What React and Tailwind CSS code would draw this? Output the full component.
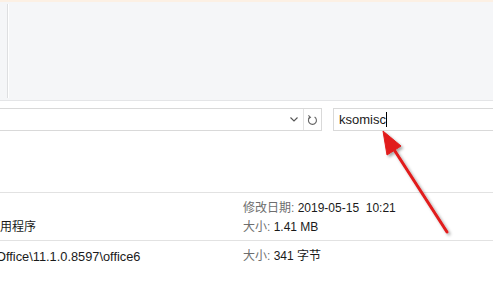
import React from 'react';

const labelCls = 'text-[#6e6e6e]';
const valueCls = 'text-[#1a1a1a]';

const App = () => {
  return (
    <div className="relative w-[493px] h-[299px] overflow-hidden bg-white text-[12px] leading-[19px] font-['Liberation_Sans','Noto_Sans_CJK_SC',sans-serif]">
      {/* ribbon */}
      <div className="h-[2px] bg-[#fcf0e4]" />
      <div className="h-[99px] bg-[#f5f6f8] border-b border-[#e4e5e7] flex pl-[7px] py-[2px]">
        <div className="w-[1px] bg-[#dedfe1]" />
        <div className="w-[1px] bg-white" />
      </div>

      {/* address + search */}
      <div className="mt-[7px] flex h-[23px]">
        <div className="w-[322px] flex border-y border-r border-[#d9d9d9]">
          <div className="flex-1 flex items-center justify-end pr-[5px]">
            <svg width="8" height="5" viewBox="0 0 8 5" className="text-[#555]">
              <path d="M0.5 0.5 L4 4 L7.5 0.5" fill="none" stroke="currentColor" strokeWidth="1.1" />
            </svg>
          </div>
          <div className="w-[1px] bg-[#e3e3e3]" />
          <div className="w-[17px] flex items-center justify-center">
            <svg width="11" height="12" viewBox="0 0 11 12" className="text-[#666]">
              <path d="M3 3.2 A4 4 0 1 0 7.6 3" fill="none" stroke="currentColor" strokeWidth="1.1" />
              <path d="M1.4 1.4 L3.4 3.3 L1.2 4.4" fill="none" stroke="currentColor" strokeWidth="1.1" />
            </svg>
          </div>
        </div>
        <div className="w-[11px]" />
        <div className="flex-1 flex items-center border-y border-l border-[#d9d9d9] pl-[5px]">
          <span className="text-[13px] text-[#1a1a1a]">ksomisc</span>
          <span className="w-[1px] h-[15px] bg-black" />
        </div>
      </div>

      {/* results */}
      <div className="mt-[61px] border-t border-[#e2e2e2]">
        <div className="h-[47px] flex pt-[6px]">
          <div className="w-[243px] overflow-hidden text-[#1a1a1a]">
            <div className="h-[19px]" />
            <div className="-ml-[12px] whitespace-nowrap">应用程序</div>
          </div>
          <div>
            <div>
              <span className={labelCls}>修改日期: </span>
              <span className={valueCls}>2019-05-15&nbsp;&nbsp;10:21</span>
            </div>
            <div>
              <span className={labelCls}>大小: </span>
              <span className={valueCls}>1.41 MB</span>
            </div>
          </div>
        </div>
        <div className="border-t border-[#e2e2e2] flex pt-[6px]">
          <div className="w-[243px] overflow-hidden text-[#1a1a1a]">
            <div className="-ml-[4px] whitespace-nowrap text-[12.8px]">Office\11.1.0.8597\office6</div>
          </div>
          <div>
            <span className={labelCls}>大小: </span>
            <span className={valueCls}>341 字节</span>
          </div>
        </div>
      </div>

      {/* annotation arrow */}
      <svg className="absolute left-0 top-0 pointer-events-none" width="493" height="299" viewBox="0 0 493 299">
        <defs>
          <filter id="sh" x="-20%" y="-20%" width="140%" height="140%">
            <feDropShadow dx="2" dy="2" stdDeviation="1.5" floodColor="#000" floodOpacity="0.35" />
          </filter>
        </defs>
        <g filter="url(#sh)" fill="#e11b1b" stroke="#e11b1b">
          <line x1="447" y1="232" x2="393" y2="148" strokeWidth="3" strokeLinecap="round" />
          <polygon points="383,131 387,155 401,146" strokeWidth="1" strokeLinejoin="round" />
        </g>
      </svg>
    </div>
  );
};

export default App;
